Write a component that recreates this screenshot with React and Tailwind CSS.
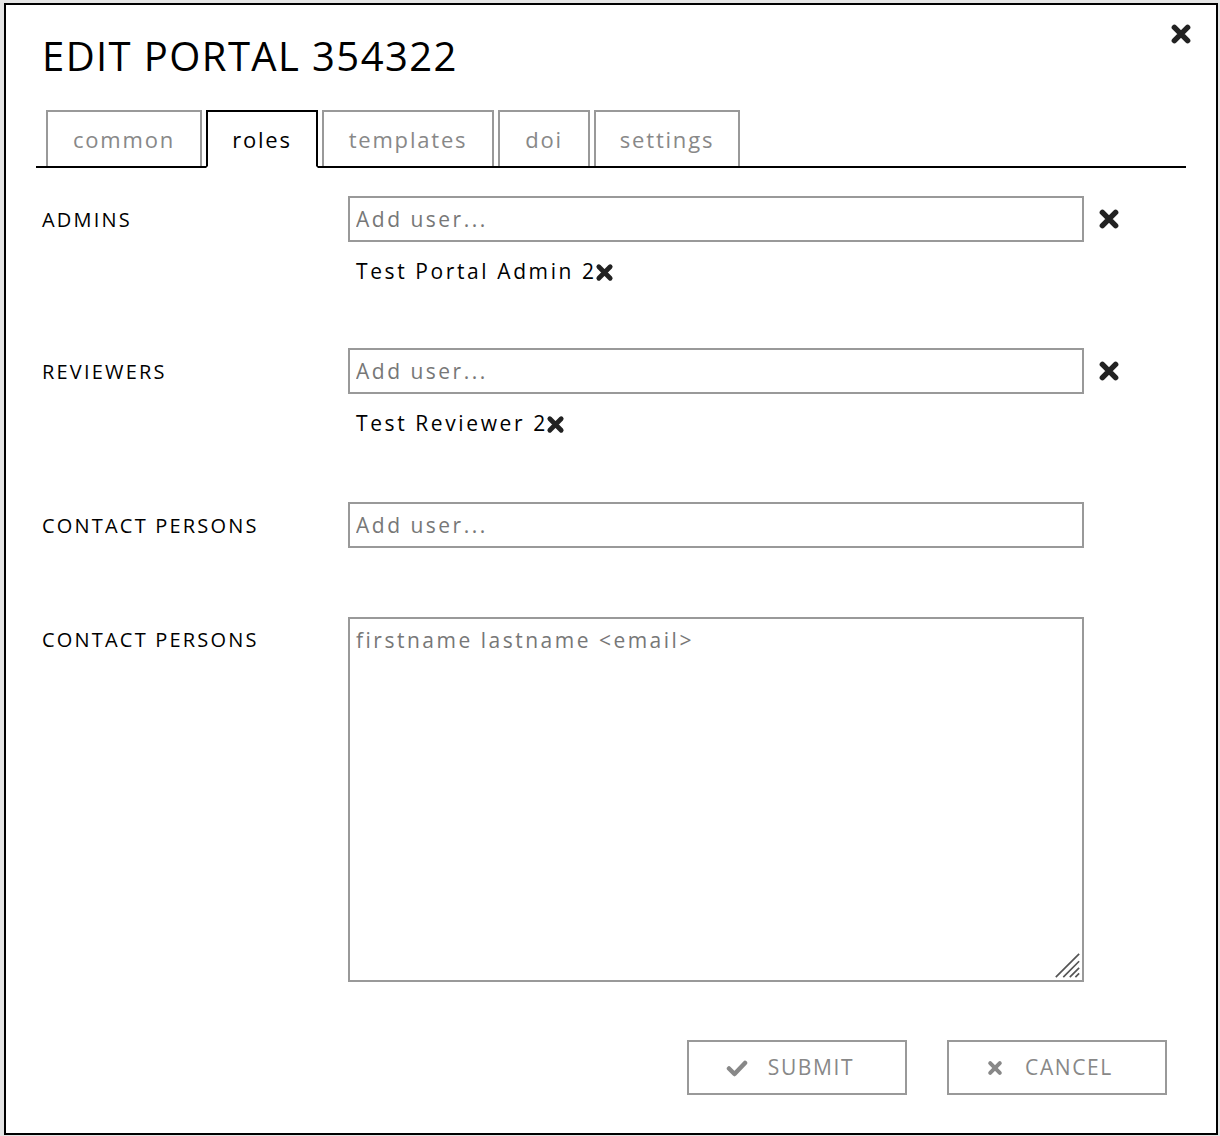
import React from 'react';

const font = { fontFamily: '"Open Sans", "DejaVu Sans", sans-serif' };

const tabs = [
    { label: 'common', width: 'w-[156px]' },
    { label: 'roles', width: 'w-[112px]', active: true },
    { label: 'templates', width: 'w-[172px]' },
    { label: 'doi', width: 'w-[92px]' },
    { label: 'settings', width: 'w-[146px]' },
];

const XIcon = ({ className = '' }) => (
    <svg viewBox="0 0 20 20" className={className}>
        <path d="M4 4 L16 16 M16 4 L4 16" stroke="currentColor" strokeWidth="5" strokeLinecap="round" fill="none" />
    </svg>
);

const CheckIcon = ({ className = '' }) => (
    <svg viewBox="0 0 22 18" className={className}>
        <path d="M3 9.5 L8.5 15 L19 4" stroke="currentColor" strokeWidth="4.5" strokeLinecap="round" strokeLinejoin="round" fill="none" />
    </svg>
);

const UserRow = ({ label, users, removable }) => (
    <div className="flex">
        <div className="w-[306px] shrink-0 h-[46px] flex items-center pt-[1px] text-[20px] tracking-[2.2px] text-black">
            {label}
        </div>
        <div className="flex-1">
            <div className="flex items-center">
                <input
                    placeholder="Add user..."
                    className="w-[736px] shrink-0 h-[46px] border-2 border-[#999] px-[6px] text-[21px] tracking-[2.5px] text-black placeholder:text-[#777] outline-none"
                    style={font}
                />
                {removable && <XIcon className="w-[22px] h-[22px] ml-[14px] shrink-0 text-[#222]" />}
            </div>
            {users.length > 0 && (
                <div className="pt-[16px] pl-[8px] flex flex-col">
                    {users.map((u) => (
                        <div key={u} className="flex items-center h-[28px] text-[21px] tracking-[2.6px] text-black">
                            {u}
                            <XIcon className="w-[19px] h-[19px] -ml-[2px] text-[#222]" />
                        </div>
                    ))}
                </div>
            )}
        </div>
    </div>
);

export default function App() {
    return (
        <div className="min-h-screen bg-[#e4e4e4] pt-[3px] pl-[4px]" style={font}>
            <div className="relative w-[1214px] h-[1132px] bg-white border-2 border-black flex flex-col">
                <button className="absolute top-[18px] right-[24px] text-[#222]">
                    <XIcon className="w-[22px] h-[22px]" />
                </button>

                <h1 className="pl-[36px] pt-[31px] text-[40px] leading-[40px] font-medium tracking-[1.4px] text-black">
                    EDIT PORTAL 354322
                </h1>

                <div className="mx-[30px] mt-[34px] pl-[10px] flex gap-[4px] border-b-2 border-black">
                    {tabs.map((t) => (
                        <div
                            key={t.label}
                            className={
                                t.active
                                    ? `${t.width} h-[58px] -mb-[2px] border-2 border-black border-b-white bg-white flex items-center justify-center pt-[1px] text-[22px] tracking-[1.8px] text-black`
                                    : `${t.width} h-[56px] border-2 border-b-0 border-[#999] flex items-center justify-center pt-[1px] text-[22px] tracking-[1.8px] text-[#888]`
                            }
                        >
                            {t.label}
                        </div>
                    ))}
                </div>

                <div className="px-[36px] pt-[28px] flex flex-col">
                    <UserRow label="ADMINS" users={['Test Portal Admin 2']} removable />
                    <div className="h-[62px]" />
                    <UserRow label="REVIEWERS" users={['Test Reviewer 2']} removable />
                    <div className="h-[64px]" />
                    <UserRow label="CONTACT PERSONS" users={[]} />
                    <div className="h-[69px]" />
                    <div className="flex">
                        <div className="w-[306px] h-[46px] flex items-center text-[20px] tracking-[2.2px] text-black">
                            CONTACT PERSONS
                        </div>
                        <div className="relative w-[736px] h-[365px]">
                            <textarea
                                placeholder="firstname lastname <email>"
                                className="w-full h-full resize-none border-2 border-[#999] px-[6px] py-[6px] text-[21px] tracking-[2.5px] text-black placeholder:text-[#777] outline-none"
                                style={font}
                            />
                            <svg viewBox="0 0 30 30" className="absolute right-[3px] bottom-[3px] w-[28px] h-[28px] pointer-events-none">
                                <path d="M28 3 L3 28 M28 11 L11 28 M28 18 L18 28 M28 24 L24 28" stroke="#555" strokeWidth="1.8" />
                            </svg>
                        </div>
                    </div>
                </div>

                <div className="mt-auto mb-[38px] mr-[49px] flex justify-end gap-[40px]">
                    <button className="w-[220px] h-[55px] border-2 border-[#999] flex items-center justify-center gap-[20px] pr-[14px] text-[21px] tracking-[1.6px] text-[#888]">
                        <CheckIcon className="w-[22px] h-[18px] text-[#888]" />
                        SUBMIT
                    </button>
                    <button className="w-[220px] h-[55px] border-2 border-[#999] flex items-center justify-center gap-[22px] pr-[14px] text-[21px] tracking-[1.6px] text-[#888]">
                        <XIcon className="w-[16px] h-[16px] text-[#888]" />
                        CANCEL
                    </button>
                </div>
            </div>
        </div>
    );
}
